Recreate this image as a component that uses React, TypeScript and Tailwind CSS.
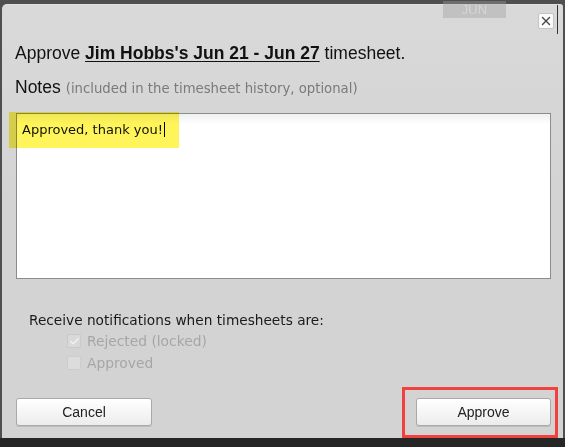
import { X, Check } from "lucide-react"

const verdana = { fontFamily: '"DejaVu Sans", Verdana, sans-serif' }

export default function App() {
    return (
        <div className="flex h-[447px] w-[565px] flex-col overflow-hidden bg-[#4f4f4f]" style={{ fontFamily: '"Liberation Sans", Arial, sans-serif' }}>
            <div className="relative flex-1 pl-[2px] pr-[2px] pt-[4px]">
                {/* faint header behind the dialog */}
                <div className="absolute left-[443px] top-[1px] z-20 flex h-[17px] w-[63px] items-center justify-center bg-[#9e9e9e]/40 text-[13px] text-[#d6d6d6]">
                    JUN
                </div>
                <div className="relative h-[434px] rounded-tl-[5px] rounded-tr-[3px] border-t border-[#e2e2e2] bg-gradient-to-b from-[#d9d9d9] via-[#d3d3d3] to-[#d3d3d3] to-[20px]">
                    <button className="absolute right-[9px] top-[8px] flex h-[16px] w-[16px] items-center justify-center rounded-[2px] border border-[#c4c4c4] bg-[#fafafa]">
                        <X className="h-[14px] w-[14px] text-[#444]" strokeWidth={2.4} />
                    </button>

                    <div className="pl-[13px] pt-[38px] text-[17.5px] leading-[20px] text-[#111]">
                        Approve{" "}
                        <span className="font-bold underline underline-offset-2">Jim Hobbs's Jun 21 - Jun 27</span>{" "}
                        timesheet.
                    </div>

                    <div className="mt-[14px] flex items-baseline gap-[5px] pl-[13px] text-[17.5px] leading-[20px] text-[#111]">
                        Notes
                        <span className="text-[13.25px] text-[#7a7a7a]" style={verdana}>
                            (included in the timesheet history, optional)
                        </span>
                    </div>

                    <div className="ml-[14px] mt-[14px] h-[166px] w-[535px] border border-[#8c8c8c] bg-gradient-to-b from-[#eef0f2] to-white to-[10px] pl-[5px] pt-[5px] text-[13px] text-[#111]" style={verdana}>
                        Approved, thank you!
                        <span className="ml-[1px] inline-block h-[15px] w-[1px] translate-y-[3px] bg-black" />
                    </div>

                    {/* highlight annotation */}
                    <div className="absolute left-[7px] top-[107px] h-[36px] w-[170px] bg-[#fff55a] mix-blend-multiply" />

                    <div className="ml-[27px] mt-[33px] text-[13.7px] leading-[16px] text-[#1a1a1a]" style={verdana}>
                        Receive notifications when timesheets are:
                    </div>
                    <div className="ml-[65px] mt-[6px] flex flex-col gap-[8px] text-[13.8px] leading-[14px] text-[#a6a6a6]" style={verdana}>
                        <div className="flex items-center gap-[6px]">
                            <span className="flex h-[14px] w-[14px] items-center justify-center rounded-[2px] border border-[#c9c9c9] bg-[#d9d9d9]">
                                <Check className="h-[11px] w-[11px] text-[#f2f2f2]" strokeWidth={3} />
                            </span>
                            Rejected (locked)
                        </div>
                        <div className="flex items-center gap-[6px]">
                            <span className="h-[14px] w-[14px] rounded-[2px] border border-[#cdcdcd] bg-[#dcdcdc]" />
                            Approved
                        </div>
                    </div>

                    <div className="absolute left-[14px] right-[12px] top-[393px] flex justify-between">
                        <button className="h-[28px] w-[136px] rounded-[3px] border border-[#a9a9a9] bg-gradient-to-b from-white to-[#ececec] text-[14px] text-[#222] shadow-[0_1px_0_#bcbcbc]">
                            Cancel
                        </button>
                        <button className="h-[28px] w-[135px] rounded-[3px] border border-[#a9a9a9] bg-gradient-to-b from-white to-[#ececec] text-[14px] text-[#222] shadow-[0_1px_0_#bcbcbc]">
                            Approve
                        </button>
                    </div>

                    {/* red annotation box */}
                    <div className="absolute left-[400px] top-[382px] h-[51px] w-[156px] border-[3px] border-[#f2403f]" />
                </div>
                <div className="absolute right-[7px] top-[5px] h-[29px] w-[1px] bg-[#333]" />
            </div>
            <div className="h-[9px] bg-[#262626]" />
        </div>
    )
}
